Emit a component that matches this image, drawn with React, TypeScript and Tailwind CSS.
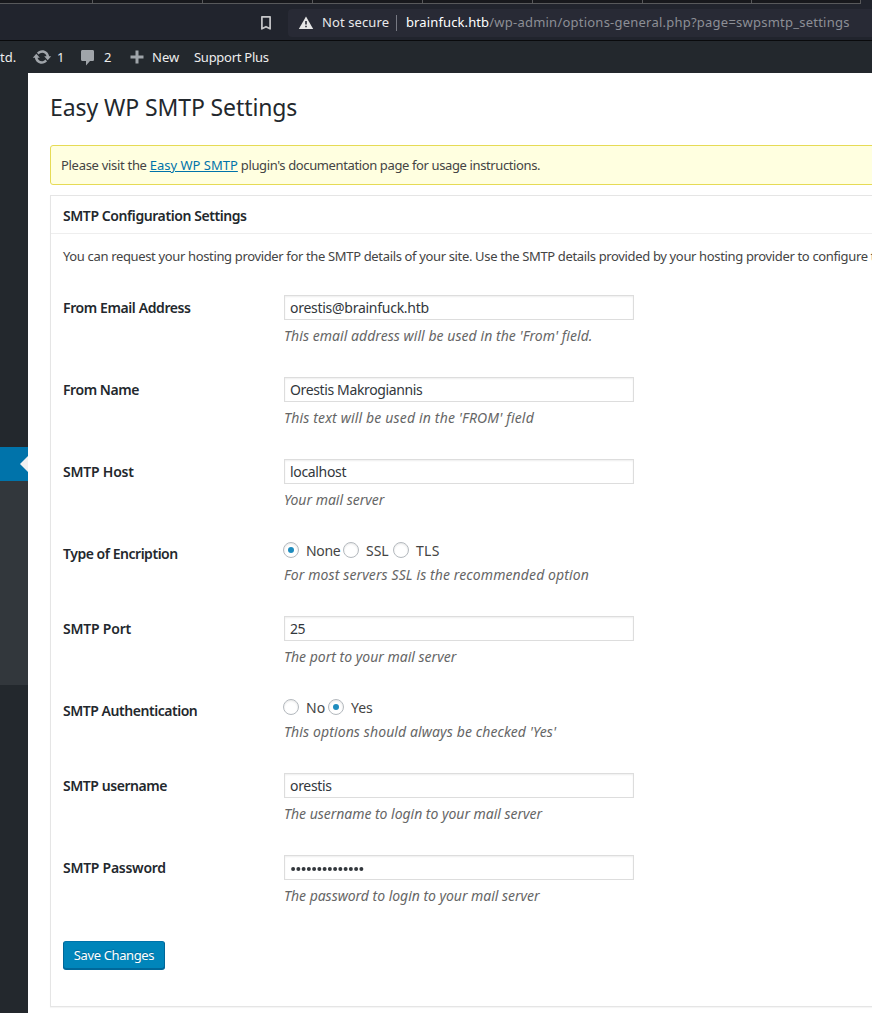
import type { ReactNode } from "react";

const TABS = [92, 110, 110, 110, 110, 110, 109, 109];

function BrowserChrome() {
  return (
    <div className="shrink-0">
      <div className="-mb-2 flex h-3 bg-[#21242d]">
        <div className="flex h-1 border-b border-[#58595b] bg-[#17181c]">
          {TABS.map((w, i) => (
            <div key={i} className="box-content h-[3px] border-r border-[#58595b]" style={{ width: i === 0 ? w : w - 1 }} />
          ))}
        </div>
      </div>
      <div className="relative flex h-9 items-center bg-[#21242d] pt-px pl-[260px]">
        <svg width="12" height="16" viewBox="0 0 12 16" className="shrink-0">
          <path d="M1.900 1.800h8.200v12L6 11.700 1.900 13.800z" fill="none" stroke="#c8c8ca" strokeWidth="1.700" strokeLinejoin="round" />
        </svg>
        <div className="ml-4 flex h-7 flex-1 items-center rounded-l-[4px] bg-[#282a35] pl-[10px]">
          <svg width="16" height="14" viewBox="0 0 16 14" className="shrink-0">
            <path d="M8 .5 15.200 13H.8z" fill="#e6e6e6" />
            <path d="M7.200 5h1.600v3.500H7.200zM7.200 9.700h1.600v1.600H7.200z" fill="#282a35" />
          </svg>
          <span className="ml-2 w-[67px] text-[13px] tracking-[0.1px] whitespace-nowrap text-[#e8e8ea]">Not secure</span>
          <span className="ml-[7px] h-4 w-px bg-[#777983]" />
          <span className="ml-[9px] text-[13px] tracking-[0.23px] whitespace-nowrap text-[#8d8f96]">
            <span className="tracking-[0.12px] text-white">brainfuck.htb</span>/wp-admin/options-general.php?page=swpsmtp_settings
          </span>
        </div>
      </div>
      <div className="h-px bg-[#090a0c]" />
    </div>
  );
}

function AdminBar() {
  return (
    <div className="flex h-8 shrink-0 items-center bg-[#23282d] text-[13px] text-[#eeeeee]">
      <span className="w-8 pt-0.5">td.</span>
      <svg width="20" height="20" viewBox="0 0 20 20" fill="#a0a5aa" className="shrink-0">
        <path d="M10.200 3.280c3.530 0 6.430 2.610 6.920 6h2.080l-3.500 4-3.500-4h2.320c-.45-1.970-2.210-3.450-4.320-3.450-1.450 0-2.730.71-3.540 1.780L4.950 5.660C6.230 4.200 8.110 3.280 10.200 3.280zm-.4 13.440c-3.520 0-6.430-2.610-6.920-6H.8l3.500-4c1.170 1.330 2.330 2.670 3.500 4H5.480c.45 1.970 2.210 3.450 4.320 3.450 1.450 0 2.730-.71 3.540-1.780l1.710 1.950c-1.280 1.460-3.150 2.380-5.250 2.380z" />
      </svg>
      <span className="ml-[5px] w-[20px] pt-0.5">1</span>
      <svg width="20" height="20" viewBox="0 0 20 20" fill="#a0a5aa" className="shrink-0">
        <path d="M5.500 3h10c1 0 1.500.6 1.500 1.500v8c0 1-.6 1.500-1.500 1.500h-2.500L9 18.500V14H5.500C4.500 14 4 13.400 4 12.500v-8C4 3.600 4.600 3 5.500 3z" />
      </svg>
      <span className="ml-[7px] w-[26px] pt-0.5">2</span>
      <svg width="14" height="14" viewBox="0 0 14 14" className="shrink-0">
        <path d="M7 .5v13M.5 7h13" stroke="#a0a5aa" strokeWidth="3" />
      </svg>
      <span className="ml-2 w-[42px] pt-0.5">New</span>
      <span className="pt-0.5 tracking-[-0.27px]">Support Plus</span>
    </div>
  );
}

function SideMenu() {
  return (
    <div className="w-7 shrink-0 bg-[#23282d] pt-[374px]">
      <div className="flex h-[34px] items-center justify-end bg-[#0073aa]">
        <svg width="8" height="16" viewBox="0 0 8 16">
          <path d="M8 0v16L0 8z" fill="#f1f1f1" />
        </svg>
      </div>
      <div className="h-[204px] bg-[#32373c]" />
    </div>
  );
}

type RowProps = { label: string; labelClass: string; help: string; helpClass: string; tall?: boolean; children: ReactNode };

function Row({ label, labelClass, help, helpClass, tall, children }: RowProps) {
  return (
    <div className={tall ? "flex h-[82px]" : "flex h-[75px]"}>
      <div className={"w-[220px] shrink-0 pt-[14px] text-[14px] leading-[18px] font-semibold text-[#23282d] " + labelClass}>{label}</div>
      <div className={tall ? "pt-[10px]" : "pt-[9px]"}>
        {children}
        <p className={(tall ? "mt-[5px] " : "mt-1 ") + "ml-px text-[14px] leading-[21px] text-[#666666] italic " + helpClass}>{help}</p>
      </div>
    </div>
  );
}

function Field({ value, className }: { value: string; className: string }) {
  return (
    <input
      type="text"
      defaultValue={value}
      className={"ml-px block h-[25px] w-[350px] border border-[#dddddd] bg-white px-[5px] text-[14px] text-[#32373c] shadow-[inset_0_1px_2px_rgba(0,0,0,0.07)] outline-none " + className}
    />
  );
}

function PasswordField({ length }: { length: number }) {
  return (
    <div className="ml-px flex h-[25px] w-[350px] items-center border border-[#dddddd] bg-white pt-[3px] pl-[5px] shadow-[inset_0_1px_2px_rgba(0,0,0,0.07)]">
      <svg width={length * 5.25 + 2} height="6" fill="#32373c">
        {Array.from({ length }, (_, i) => (
          <circle key={i} cx={3.1 + i * 5.25} cy="3" r="2" />
        ))}
      </svg>
    </div>
  );
}

function Radio({ label, width, checked }: { label: string; width: string; checked?: boolean }) {
  return (
    <label className={"flex items-center text-[14px] text-[#444444] " + width}>
      <span className="mr-[7px] flex size-4 shrink-0 items-center justify-center rounded-full border border-[#b4b9be] bg-white shadow-[inset_0_1px_2px_rgba(0,0,0,0.1)]">
        {checked && <span className="size-[6px] rounded-full bg-[#1e8cbe]" />}
      </span>
      {label}
    </label>
  );
}

export default function App() {
  return (
    <div className="flex h-[1013px] w-[872px] flex-col overflow-hidden bg-white font-['Noto_Sans',sans-serif]">
      <BrowserChrome />
      <AdminBar />
      <div className="flex min-h-0 flex-1">
        <SideMenu />
        <main className="w-[844px] overflow-hidden pl-[22px]">
          <h1 className="pt-5 text-[23px] leading-[29px] tracking-[-0.1px] text-[#23282d]">Easy WP SMTP Settings</h1>
          <div className="mt-[23px] flex h-10 w-[900px] items-center rounded-[3px] border border-[#e6db55] bg-[#ffffe0] px-[10px] pt-0.5 text-[13px] text-[#444444]">
            <p className="tracking-[-0.38px] whitespace-nowrap">
              <span className="tracking-[-0.3px]">Please visit the </span>
              <a className="tracking-normal text-[#0073aa] underline">Easy WP SMTP</a> plugin's documentation page for usage instructions.
            </p>
          </div>
          <section className="mt-[10px] h-[812px] w-[900px] border border-[#e5e5e5] shadow-[0_1px_1px_rgba(0,0,0,0.04)]">
            <h2 className="flex h-[38px] items-center border-b border-[#eeeeee] pt-px pl-3 text-[14px] font-semibold tracking-[-0.42px] text-[#23282d]">
              SMTP Configuration Settings
            </h2>
            <div className="pl-3">
              <p className="pt-3 text-[13px] leading-5 tracking-[-0.35px] whitespace-nowrap text-[#444444]">
                You can request your hosting provider for the SMTP details of your site. Use the SMTP details provided by your hosting provider to configure the
              </p>
              <div className="mt-[19px]">
                <Row label="From Email Address" labelClass="tracking-[-0.4px]" help="This email address will be used in the 'From' field." helpClass="tracking-[0.05px]" tall>
                  <Field value="orestis@brainfuck.htb" className="tracking-[-0.27px]" />
                </Row>
                <Row label="From Name" labelClass="tracking-[-0.44px]" help="This text will be used in the 'FROM' field" helpClass="tracking-[0.16px]" tall>
                  <Field value="Orestis Makrogiannis" className="tracking-[-0.37px]" />
                </Row>
                <Row label="SMTP Host" labelClass="tracking-[-0.22px]" help="Your mail server" helpClass="tracking-normal" tall>
                  <Field value="localhost" className="tracking-[-0.33px]" />
                </Row>
                <Row label="Type of Encription" labelClass="tracking-[-0.47px]" help="For most servers SSL is the recommended option" helpClass="tracking-[0.11px]">
                  <div className="flex h-5">
                    <Radio label="None" width="w-[60px] tracking-[-0.3px]" checked />
                    <Radio label="SSL" width="w-[50px]" />
                    <Radio label="TLS" width="w-[50px] tracking-[0.3px]" />
                  </div>
                </Row>
                <Row label="SMTP Port" labelClass="tracking-[-0.22px]" help="The port to your mail server" helpClass="tracking-normal" tall>
                  <Field value="25" className="tracking-[-0.4px]" />
                </Row>
                <Row label="SMTP Authentication" labelClass="tracking-[-0.46px]" help="This options should always be checked 'Yes'" helpClass="tracking-[0.11px]">
                  <div className="flex h-5">
                    <Radio label="No" width="w-[45px]" />
                    <Radio label="Yes" width="w-[50px]" checked />
                  </div>
                </Row>
                <Row label="SMTP username" labelClass="tracking-[-0.44px]" help="The username to login to your mail server" helpClass="tracking-[-0.03px]" tall>
                  <Field value="orestis" className="tracking-[-0.33px]" />
                </Row>
                <Row label="SMTP Password" labelClass="tracking-[-0.27px]" help="The password to login to your mail server" helpClass="tracking-[-0.03px]" tall>
                  <PasswordField length={14} />
                </Row>
              </div>
              <button className="mt-[14px] block h-7 w-[102px] rounded-[3px] border border-[#006799] border-t-[#0073aa] bg-[#0085ba] text-[13px] leading-[26px] tracking-[-0.38px] whitespace-nowrap text-white shadow-[0_1px_0_#006799] [text-shadow:0_-1px_1px_#006799]">
                Save Changes
              </button>
            </div>
          </section>
        </main>
      </div>
    </div>
  );
}
